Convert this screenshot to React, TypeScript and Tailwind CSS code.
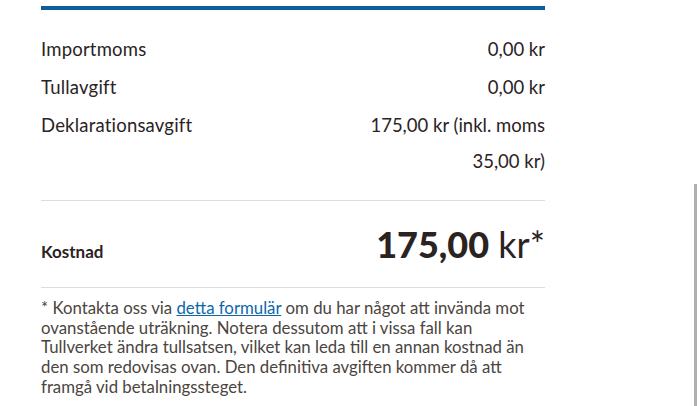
import React from 'react';

type Row = { label: string; value: React.ReactNode };

const rows: Row[] = [
  { label: 'Importmoms', value: '0,00 kr' },
  { label: 'Tullavgift', value: '0,00 kr' },
  {
    label: 'Deklarationsavgift',
    value: (
      <>
        175,00 kr (inkl. moms
        <br />
        35,00 kr)
      </>
    ),
  },
];

export default function App() {
  return (
    <div className="relative h-[406px] w-[700px] overflow-hidden bg-white font-['Lato',sans-serif] text-[#2b231f]">
      <div className="ml-[41px] w-[504px] pt-[6px]">
        <div className="h-[4px] bg-[#0b5e99]" />

        <div className="flex flex-col gap-[2px] pt-[21px] pb-[21px]">
          {rows.map((row) => (
            <div key={row.label} className="flex items-start justify-between text-[18.5px] leading-[36px]">
              <span className="tracking-[0.2px]">{row.label}</span>
              <span className="text-right">{row.value}</span>
            </div>
          ))}
        </div>

        <div className="h-px bg-[#dddddd]" />

        <div className="flex h-[86px] items-baseline justify-between pt-[25px]">
          <span className="text-[17px] font-bold">Kostnad</span>
          <span className="text-[36px] leading-none">
            <span className="font-black">175,00</span> <span className="font-normal">kr*</span>
          </span>
        </div>

        <div className="h-px bg-[#dddddd]" />

        <p className="pt-[10px] text-[16.8px] leading-[19.7px] text-[#4b4540]">
          * Kontakta oss via{' '}
          <a href="#" className="text-[#0b68a8] underline">
            detta formulär
          </a>{' '}
          om du har något att invända mot
          <br />
          ovanstående uträkning. Notera dessutom att i vissa fall kan
          <br />
          Tullverket ändra tullsatsen, vilket kan leda till en annan kostnad än
          <br />
          den som redovisas ovan. Den definitiva avgiften kommer då att
          <br />
          framgå vid betalningssteget.
        </p>
      </div>

      <div className="absolute right-[3px] top-[184px] bottom-0 w-[3px] bg-[#b0b0b0]" />
    </div>
  );
}
